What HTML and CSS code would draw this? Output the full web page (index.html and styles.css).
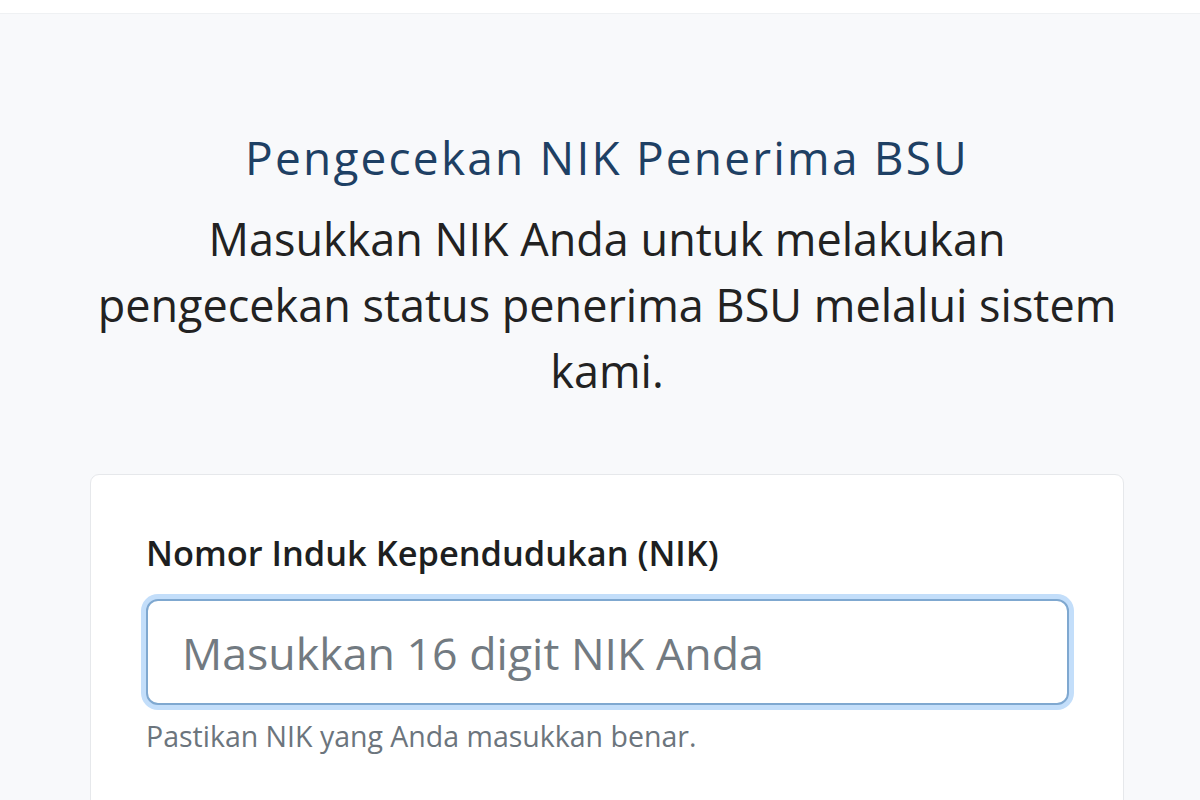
FILE: index.html
```html
<!DOCTYPE html>
<html lang="id">
<head>
<meta charset="utf-8">
<title>Pengecekan NIK Penerima BSU</title>
<link rel="stylesheet" href="styles.css">
</head>
<body>
<header class="topbar"></header>
<main class="page">
  <h1 class="title">Pengecekan NIK Penerima BSU</h1>
  <p class="lead">Masukkan NIK Anda untuk melakukan pengecekan status penerima BSU melalui sistem kami.</p>
  <section class="card">
    <label class="label" for="nik">Nomor Induk Kependudukan (NIK)</label>
    <input class="input" id="nik" type="text" placeholder="Masukkan 16 digit NIK Anda">
    <div class="help">Pastikan NIK yang Anda masukkan benar.</div>
  </section>
</main>
</body>
</html>
```
FILE: styles.css
```css
* { box-sizing: border-box; }
html, body { margin: 0; padding: 0; }
body {
  background: #f8f9fb;
  font-family: "Open Sans", "Noto Sans", sans-serif;
  color: #212529;
  overflow: hidden;
  height: 800px;
}
.topbar {
  height: 14px;
  background: #ffffff;
  border-bottom: 1px solid #eff1f3;
}
.page {
  margin-left: 90px;
  width: 1034px;
  display: flex;
  flex-direction: column;
  align-items: center;
}
.title {
  margin: 116px 0 0;
  font-family: "Open Sans", sans-serif;
  font-weight: 400;
  font-size: 46px;
  line-height: 54px;
  letter-spacing: 2.2px;
  color: #1e4064;
}
.lead {
  margin: 22px 0 0;
  max-width: 1034px;
  text-align: center;
  font-size: 45px;
  line-height: 66px;
  color: #222;
}
.card {
  align-self: stretch;
  margin-top: 70px;
  background: #ffffff;
  border: 1px solid #e6e8eb;
  border-radius: 9px;
  padding: 55px 54px 80px 55px;
  display: flex;
  flex-direction: column;
}
.label {
  font-size: 34.4px;
  font-weight: 600;
  line-height: 46px;
  color: #1d1f21;
  margin-bottom: 23px;
}
.input {
  height: 106px;
  width: 100%;
  border: 2px solid #7fa8d0;
  border-radius: 12px;
  box-shadow: 0 0 0 5px #c3defa;
  padding: 0 34px;
  font-family: "Open Sans", sans-serif;
  font-size: 44.7px;
  color: #212529;
  background: #fff;
  outline: none;
}
.input::placeholder { color: #727a81; }
.help {
  margin-top: 12px;
  font-size: 28.5px;
  line-height: 38px;
  color: #6c757d;
}
```
